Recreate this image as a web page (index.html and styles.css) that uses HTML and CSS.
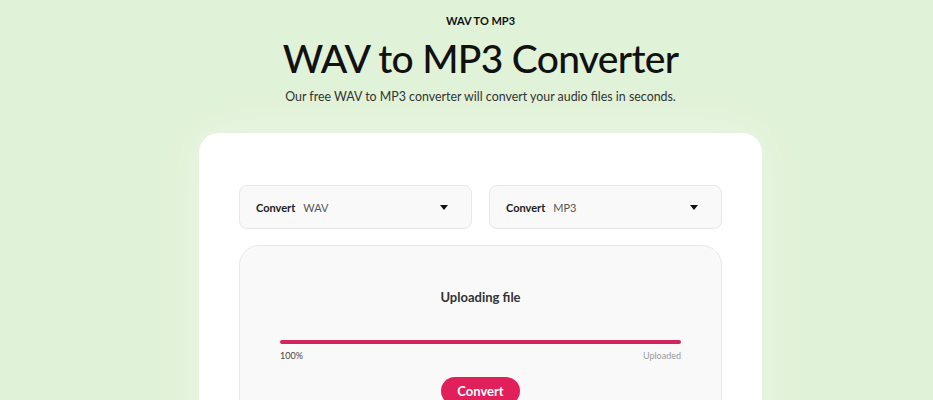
FILE: index.html
```html
<!DOCTYPE html>
<html lang="en">
<head>
    <meta charset="UTF-8">
    <meta name="viewport" content="width=device-width, initial-scale=1.0">
    <title>WAV to MP3 Converter</title>
    <link rel="stylesheet" href="styles.css">
</head>
<body>
    <div class="hero">
        <p class="eyebrow">WAV TO MP3</p>
        <h1>WAV to MP3 Converter</h1>
        <p class="lead">Our free WAV to MP3 converter will convert your audio files in seconds.</p>
    </div>

    <div class="card">
        <!-- Выбор форматов -->
        <div class="selects">
            <div class="select">
                <span class="select-label">Convert</span>
                <span class="select-value">WAV</span>
                <span class="caret"></span>
            </div>
            <div class="select">
                <span class="select-label">Convert</span>
                <span class="select-value">MP3</span>
                <span class="caret"></span>
            </div>
        </div>

        <!-- Загрузка файла -->
        <div class="upload">
            <h3>Uploading file</h3>
            <div class="progress">
                <div class="progress-bar" style="width: 100%"></div>
            </div>
            <div class="progress-info">
                <span>100%</span>
                <span class="muted">Uploaded</span>
            </div>
            <button class="convert-btn">Convert</button>
        </div>
    </div>
</body>
</html>
```

FILE: styles.css
```css
body {
    font-family: Lato, "Noto Sans", sans-serif;
    margin: 0;
    padding-left: 28px;
    background-color: #e0f2d7;
    color: #111;
}
.hero {
    text-align: center;
    padding-top: 14px;
}
.eyebrow {
    margin: 0;
    font-size: 11px;
    font-weight: 700;
    line-height: 13px;
}
h1 {
    margin: 6px 0 0;
    font-size: 39px;
    font-weight: 500;
    line-height: 50px;
    letter-spacing: -0.7px;
}
.lead {
    margin: 5px 0 0;
    font-size: 12.4px;
    line-height: 18px;
    color: #333;
}
.card {
    width: 483px;
    margin: 27px auto 0;
    padding: 52px 40px 40px;
    background: #fff;
    border-radius: 20px;
    box-shadow: 0 0 50px rgba(255, 255, 255, 0.45);
}
.selects {
    display: flex;
    gap: 17px;
}
.select {
    flex: 1;
    display: flex;
    align-items: center;
    height: 42px;
    padding: 0 23px 0 16px;
    background: #f9f9f9;
    border: 1px solid #e8e8e8;
    border-radius: 8px;
    font-size: 11px;
}
.select-label {
    font-weight: 700;
    color: #222;
}
.select-value {
    margin-left: 8px;
    color: #555;
}
.caret {
    margin-left: auto;
    width: 0;
    height: 0;
    border-left: 4px solid transparent;
    border-right: 4px solid transparent;
    border-top: 5px solid #111;
}
.upload {
    margin-top: 16px;
    padding: 43px 40px 20px;
    background: #f9f9f9;
    border: 1px solid #e8e8e8;
    border-radius: 20px;
    text-align: center;
}
.upload h3 {
    margin: 0;
    font-size: 13px;
    font-weight: 700;
    color: #333;
}
.progress {
    margin-top: 35px;
    height: 4px;
    background: #eee;
    border-radius: 2px;
}
.progress-bar {
    height: 100%;
    background: #d2255d;
    border-radius: 2px;
}
.progress-info {
    display: flex;
    justify-content: space-between;
    margin-top: 6px;
    font-size: 9px;
    color: #444;
}
.muted {
    color: #999;
}
.convert-btn {
    margin-top: 16px;
    padding: 6px 16px;
    border: none;
    border-radius: 14px;
    background-color: #e11f5b;
    color: white;
    font-family: inherit;
    font-size: 13px;
    font-weight: 700;
    cursor: pointer;
}
```
